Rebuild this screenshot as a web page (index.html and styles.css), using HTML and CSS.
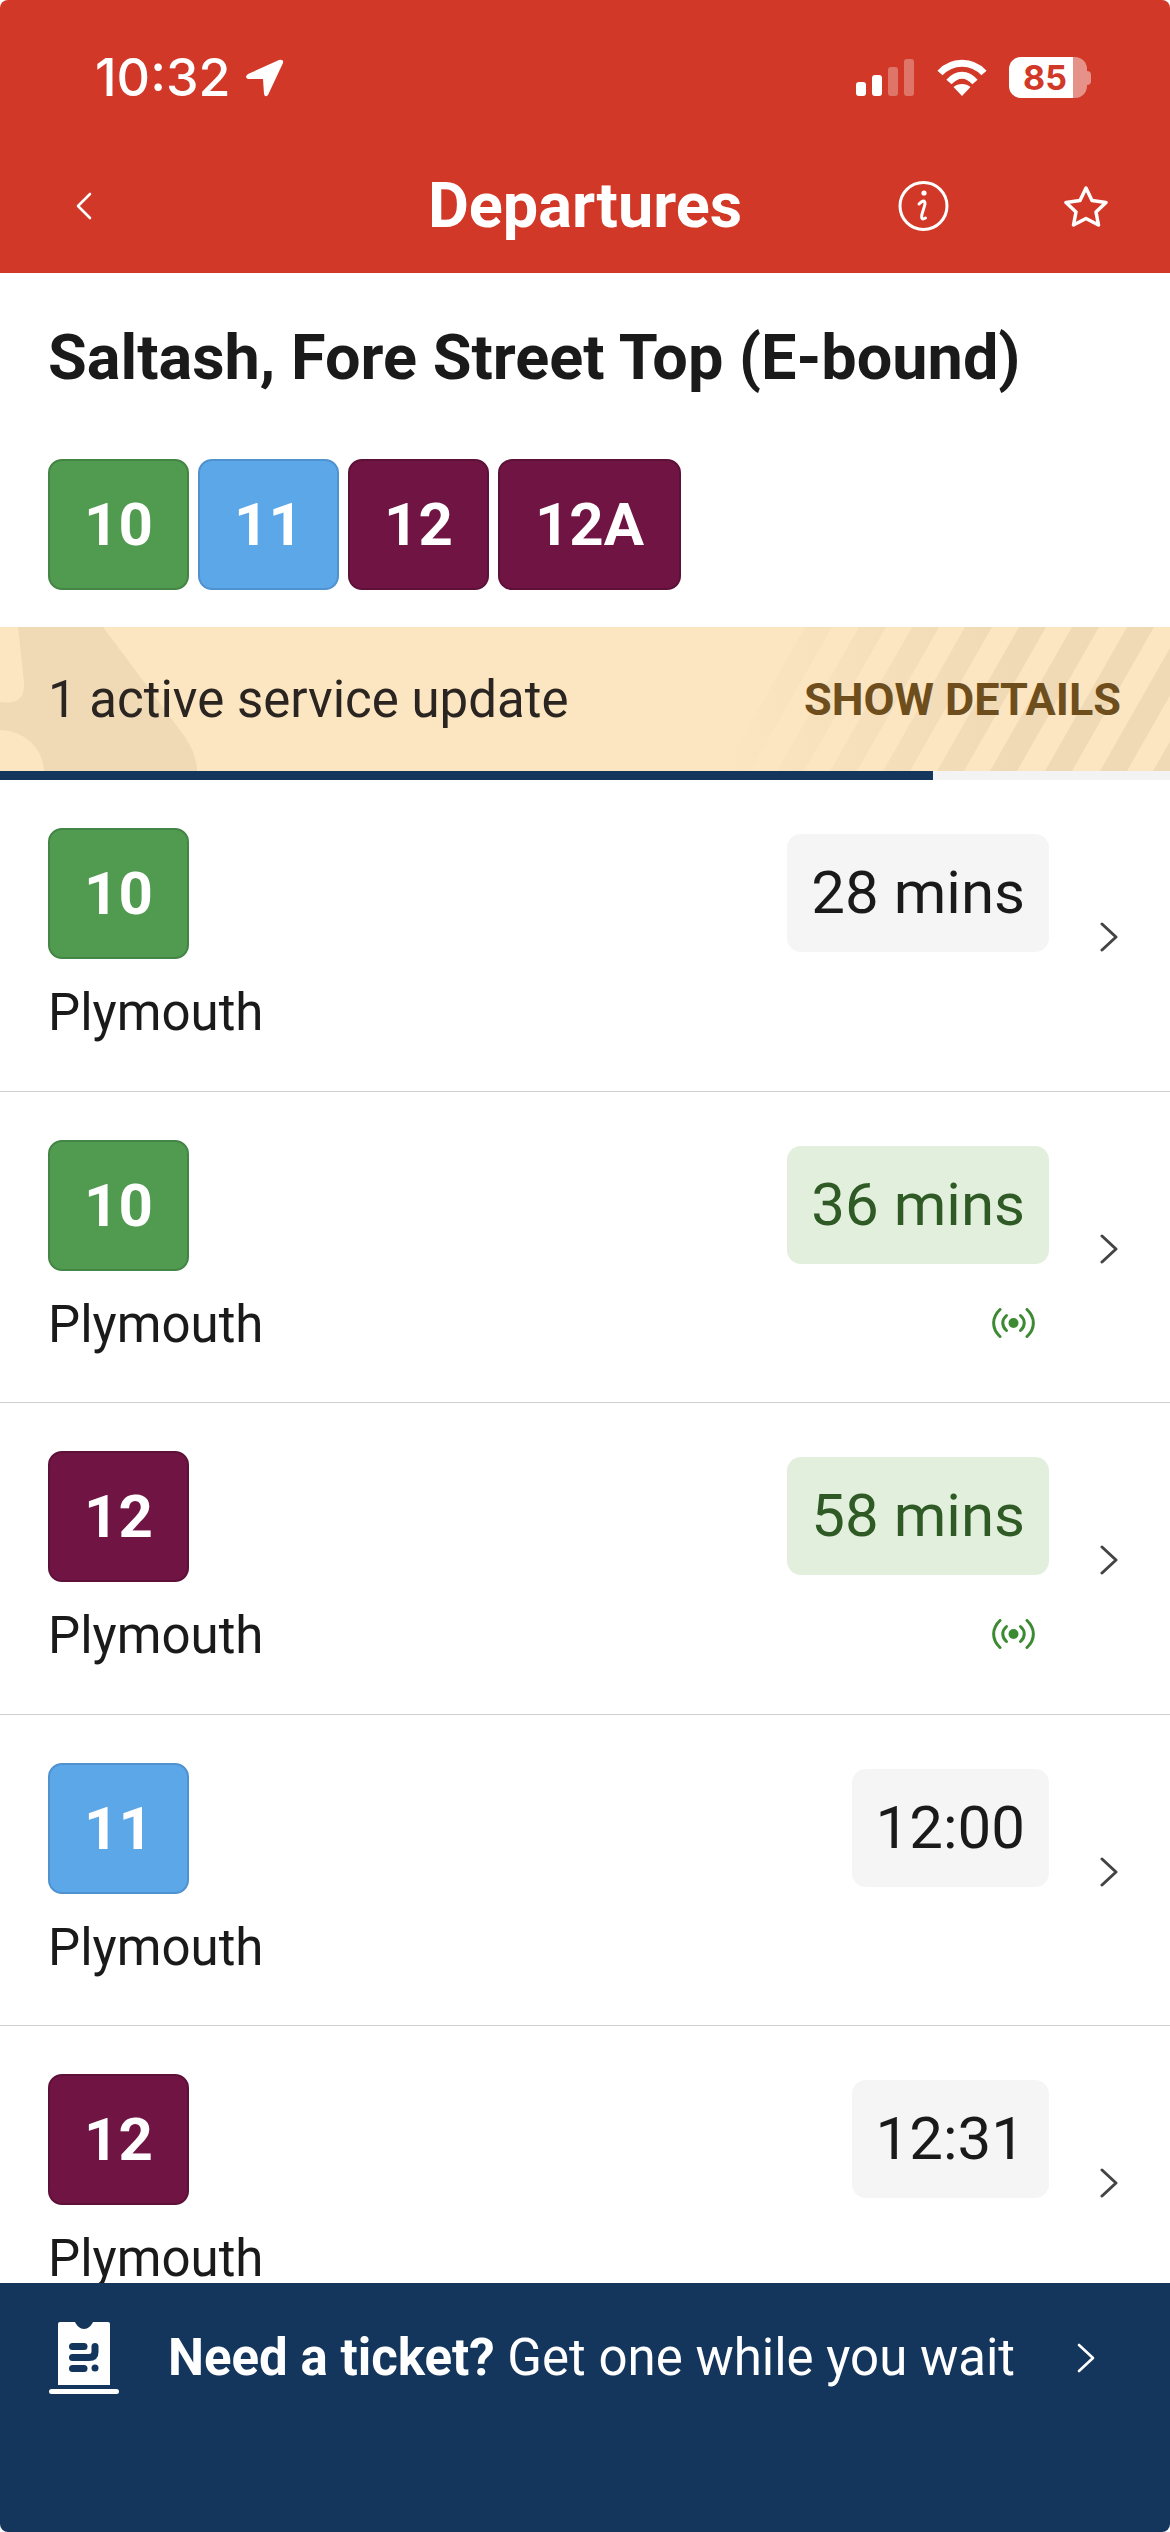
FILE: index.html
```html
<!DOCTYPE html>
<html>
<head>
    <title>Departures</title>
    <link rel="stylesheet" href="styles.css">
</head>
<body>
<div class="app">
    <header class="header">
        <div class="status">
            <div class="status-left">
                <span class="clock">10:32</span>
                <svg class="arrow" width="39" height="38" viewBox="0 0 39 38"><path d="M34 1L3 15Q-1 18 3 20L18 20L19 35Q20 39 23 36L38 4Q39 0 34 1Z" fill="#fff"/></svg>
            </div>
            <div class="status-right">
                <svg width="58" height="37" viewBox="0 0 58 37" fill="#fff">
                    <rect x="0" y="23" width="10" height="14" rx="3"/>
                    <rect x="16" y="16" width="10" height="21" rx="3"/>
                    <rect x="32" y="8" width="10" height="29" rx="3" opacity=".3"/>
                    <rect x="48" y="0" width="10" height="37" rx="3" opacity=".3"/>
                </svg>
                <svg class="wifi" width="50" height="37" viewBox="0 0 50 37" fill="none" stroke="#fff" stroke-width="7">
                    <path d="M3 14C15 1 35 1 47 14"/>
                    <path d="M12 23C20 14 30 14 38 23"/>
                    <path d="M25 37L16.5 28C21 24 29 24 33.5 28Z" fill="#fff" stroke="none"/>
                </svg>
                <div class="battery">
                    <div class="battery-body">85</div>
                    <div class="battery-nub"></div>
                </div>
            </div>
        </div>
        <nav class="nav">
            <svg class="back" width="16" height="28" viewBox="0 0 16 28" fill="none" stroke="#fff" stroke-width="2.6" stroke-linecap="round" stroke-linejoin="round"><path d="M14 2L2 14L14 26"/></svg>
            <h1 class="nav-title">Departures</h1>
            <div class="nav-actions">
                <svg width="51" height="50" viewBox="0 0 51 50" fill="none" stroke="#fff" stroke-width="3" stroke-linecap="round">
                    <circle cx="25.5" cy="25" r="23.5"/>
                    <circle cx="26" cy="12" r="2.6" fill="#fff" stroke="none"/>
                    <path d="M21 23Q27 17 27 23Q26 27 24 33Q22.5 40 27.5 37"/>
                </svg>
                <svg width="44" height="42" viewBox="0 0 44 42" fill="none" stroke="#fff" stroke-width="3.5" stroke-linejoin="round"><path d="M22 3L28 15.5L42 17.5L32 27L34.5 40L22 33.5L9.5 40L12 27L2 17.5L16 15.5Z"/></svg>
            </div>
        </nav>
    </header>

    <section class="stop">
        <h2 class="stop-name">Saltash, Fore Street Top (E-bound)</h2>
        <div class="routes">
            <span class="badge green">10</span>
            <span class="badge blue">11</span>
            <span class="badge maroon">12</span>
            <span class="badge maroon wide">12A</span>
        </div>
    </section>

    <div class="notice">
        <svg class="notice-bg" width="1170" height="144" viewBox="0 0 1170 144">
            <defs>
                <linearGradient id="fade" gradientUnits="userSpaceOnUse" x1="720" y1="0" x2="1010" y2="0">
                    <stop offset="0" stop-color="#f0dab6" stop-opacity="0"/>
                    <stop offset="1" stop-color="#f0dab6"/>
                </linearGradient>
            </defs>
            <path d="M0 0H103L185 110Q197 128 197 144H0Z" fill="#f0dab6"/>
            <path d="M0 0H18L24 56Q25 75 8 75.5L0 75Z" fill="#fce6c2"/>
            <ellipse cx="0" cy="146" rx="44" ry="43" fill="#fce6c2"/>
            <g fill="url(#fade)">
                <polygon points="723,144 750,144 832,0 805,0"/>
                <polygon points="777,144 804,144 886,0 859,0"/>
                <polygon points="830,144 857,144 939,0 912,0"/>
                <polygon points="883,144 910,144 992,0 965,0"/>
                <polygon points="937,144 964,144 1046,0 1019,0"/>
                <polygon points="990,144 1017,144 1099,0 1072,0"/>
                <polygon points="1045,144 1072,144 1154,0 1127,0"/>
                <polygon points="1100,144 1127,144 1209,0 1182,0"/>
                <polygon points="1153,144 1180,144 1262,0 1235,0"/>
            </g>
        </svg>
        <span class="notice-text">1 active service update</span>
        <span class="notice-link">SHOW DETAILS</span>
    </div>
    <div class="progress"><div class="progress-bar"></div></div>

    <main class="list">
        <div class="row">
            <div class="row-main">
                <span class="badge green">10</span>
                <div class="dest">Plymouth</div>
            </div>
            <div class="row-time">
                <span class="pill">28 mins</span>
            </div>
            <svg class="chevron" width="18" height="30" viewBox="0 0 18 30" fill="none" stroke="#444" stroke-width="3" stroke-linecap="round" stroke-linejoin="round"><path d="M2 2L16 15L2 28"/></svg>
        </div>
        <div class="row">
            <div class="row-main">
                <span class="badge green">10</span>
                <div class="dest">Plymouth</div>
            </div>
            <div class="row-time">
                <span class="pill live">36 mins</span>
                <svg class="live-icon" width="43" height="30" viewBox="0 0 43 30" fill="none" stroke="#3c8a32" stroke-width="3" stroke-linecap="round">
                    <path d="M8 1.5C-.5 9.5-.5 20.5 8 28.5"/>
                    <path d="M35 1.5C43.5 9.5 43.5 20.5 35 28.5"/>
                    <path d="M14.5 7.5C9.5 12 9.5 18 14.5 22.5"/>
                    <path d="M28.5 7.5C33.5 12 33.5 18 28.5 22.5"/>
                    <circle cx="21.5" cy="15" r="5" fill="#3c8a32" stroke="none"/>
                </svg>
            </div>
            <svg class="chevron" width="18" height="30" viewBox="0 0 18 30" fill="none" stroke="#444" stroke-width="3" stroke-linecap="round" stroke-linejoin="round"><path d="M2 2L16 15L2 28"/></svg>
        </div>
        <div class="row">
            <div class="row-main">
                <span class="badge maroon">12</span>
                <div class="dest">Plymouth</div>
            </div>
            <div class="row-time">
                <span class="pill live">58 mins</span>
                <svg class="live-icon" width="43" height="30" viewBox="0 0 43 30" fill="none" stroke="#3c8a32" stroke-width="3" stroke-linecap="round">
                    <path d="M8 1.5C-.5 9.5-.5 20.5 8 28.5"/>
                    <path d="M35 1.5C43.5 9.5 43.5 20.5 35 28.5"/>
                    <path d="M14.5 7.5C9.5 12 9.5 18 14.5 22.5"/>
                    <path d="M28.5 7.5C33.5 12 33.5 18 28.5 22.5"/>
                    <circle cx="21.5" cy="15" r="5" fill="#3c8a32" stroke="none"/>
                </svg>
            </div>
            <svg class="chevron" width="18" height="30" viewBox="0 0 18 30" fill="none" stroke="#444" stroke-width="3" stroke-linecap="round" stroke-linejoin="round"><path d="M2 2L16 15L2 28"/></svg>
        </div>
        <div class="row">
            <div class="row-main">
                <span class="badge blue">11</span>
                <div class="dest">Plymouth</div>
            </div>
            <div class="row-time">
                <span class="pill">12:00</span>
            </div>
            <svg class="chevron" width="18" height="30" viewBox="0 0 18 30" fill="none" stroke="#444" stroke-width="3" stroke-linecap="round" stroke-linejoin="round"><path d="M2 2L16 15L2 28"/></svg>
        </div>
        <div class="row">
            <div class="row-main">
                <span class="badge maroon">12</span>
                <div class="dest">Plymouth</div>
            </div>
            <div class="row-time">
                <span class="pill">12:31</span>
            </div>
            <svg class="chevron" width="18" height="30" viewBox="0 0 18 30" fill="none" stroke="#444" stroke-width="3" stroke-linecap="round" stroke-linejoin="round"><path d="M2 2L16 15L2 28"/></svg>
        </div>
    </main>

    <footer class="ticket">
        <svg width="70" height="73" viewBox="0 0 70 73">
            <path d="M9 64V3a2 2 0 0 1 2-2H26C28 5 31 8 35 8S42 5 44 1H59a2 2 0 0 1 2 2V64Z" fill="#fff"/>
            <g fill="none" stroke="#14355c" stroke-width="7" stroke-linecap="round">
                <path d="M23.5 25.5H35"/>
                <path d="M23.5 36.5H40Q46 36.5 46 31V25.5"/>
                <path d="M23.5 47.5H35"/>
            </g>
            <circle cx="46" cy="47" r="3.5" fill="#14355c"/>
            <rect x="0" y="68" width="70" height="5" rx="2.5" fill="#fff"/>
        </svg>
        <p class="ticket-text"><b>Need a ticket?</b> Get one while you wait</p>
        <svg class="ticket-chevron" width="18" height="30" viewBox="0 0 18 30" fill="none" stroke="#fff" stroke-width="2.6" stroke-linecap="round" stroke-linejoin="round"><path d="M2 2L16 15L2 28"/></svg>
    </footer>
</div>
</body>
</html>
```

FILE: styles.css
```css
* {
    box-sizing: border-box;
}

body {
    margin: 0;
    background: #fff;
    font-family: Roboto, "Liberation Sans", sans-serif;
}

.app {
    width: 1170px;
    height: 2532px;
    display: flex;
    flex-direction: column;
    overflow: hidden;
    border-radius: 8px;
}

/* header */
.header {
    height: 273px;
    flex: none;
    padding-top: 57px;
    background: #d13827;
    color: #fff;
}

.status {
    display: flex;
    justify-content: space-between;
    align-items: center;
    height: 41px;
    padding: 0 79px 0 95px;
}

.status-left {
    display: flex;
    align-items: center;
    gap: 14px;
}

.clock {
    font-family: Inter, sans-serif;
    font-weight: 500;
    font-size: 52px;
    line-height: 41px;
}

.status-right {
    display: flex;
    align-items: center;
}

.wifi {
    margin-left: 23px;
}

.battery {
    display: flex;
    align-items: center;
    margin-left: 22px;
}

.battery-body {
    width: 78px;
    height: 41px;
    border-radius: 12px;
    background: linear-gradient(to right, #fff 64px, rgba(255, 255, 255, 0.45) 64px);
    color: #d13827;
    font-family: Inter, sans-serif;
    font-weight: 700;
    font-size: 34px;
    line-height: 41px;
    text-align: center;
    padding-right: 6px;
}

.battery-nub {
    width: 4px;
    height: 14px;
    border-radius: 0 7px 7px 0;
    background: rgba(255, 255, 255, 0.45);
}

.nav {
    display: grid;
    grid-template-columns: 1fr auto 1fr;
    align-items: center;
    height: 50px;
    margin-top: 83px;
    padding: 0 62px;
}

.back {
    margin-left: 14px;
}

.nav-title {
    margin: 0;
    font-size: 63px;
    font-weight: 700;
    line-height: 50px;
}

.nav-actions {
    display: flex;
    justify-content: flex-end;
    align-items: center;
    gap: 115px;
}

/* stop heading */
.stop {
    flex: none;
    padding: 50px 48px 37px;
}

.stop-name {
    margin: 0 0 66px;
    font-size: 63px;
    font-weight: 700;
    line-height: 70px;
    color: #1a1a1a;
}

.routes {
    display: flex;
    gap: 9px;
}

.badge {
    display: inline-flex;
    align-items: center;
    justify-content: center;
    width: 141px;
    height: 131px;
    border: 2px solid;
    border-radius: 14px;
    color: #fff;
    font-size: 60px;
    font-weight: 700;
}

.badge.wide {
    width: 183px;
}

.green {
    background: #519b50;
    border-color: #438544;
}

.blue {
    background: #5ca7e8;
    border-color: #4f92cf;
}

.maroon {
    background: #701443;
    border-color: #5e1138;
}

/* service update */
.notice {
    flex: none;
    height: 144px;
    display: flex;
    justify-content: space-between;
    align-items: center;
    padding: 0 49px 0 48px;
    background: #fce6c2;
    position: relative;
    overflow: hidden;
}

.notice-bg {
    position: absolute;
    left: 0;
    top: 0;
}

.notice-text {
    position: relative;
    font-size: 51px;
    color: #2a2520;
}

.notice-link {
    position: relative;
    font-size: 45px;
    font-weight: 700;
    color: #6e4e1d;
}

.progress {
    flex: none;
    height: 9px;
    background: #f3f3f3;
}

.progress-bar {
    width: 933px;
    height: 100%;
    background: #14355c;
}

/* departures */
.list {
    flex: 1;
    min-height: 0;
    overflow: hidden;
}

.row {
    display: flex;
    height: 311.5px;
    padding: 48px 52px 0 48px;
    border-bottom: 1px solid #cfcfcf;
}

.row-main {
    flex: 1;
}

.row-main .badge {
    display: flex;
}

.dest {
    margin-top: 24px;
    font-size: 51px;
    line-height: 60px;
    color: #1a1a1a;
}

.row-time {
    display: flex;
    flex-direction: column;
    align-items: flex-end;
    padding-top: 6px;
}

.pill {
    height: 118px;
    padding: 0 24px;
    border-radius: 14px;
    background: #f5f5f5;
    color: #1a1a1a;
    font-size: 60px;
    line-height: 118px;
}

.pill.live {
    background: #e2efdc;
    color: #2f5a26;
}

.live-icon {
    margin: 44px 14px 0 0;
}

.chevron {
    margin: 94px 0 0 51px;
}

/* ticket bar */
.ticket {
    flex: none;
    height: 249px;
    padding: 38px 75px 0 49px;
    display: flex;
    align-items: flex-start;
    background: #14355c;
    color: #fff;
}

.ticket-text {
    margin: 0 0 0 49px;
    font-size: 51px;
    line-height: 73px;
}

.ticket-chevron {
    margin: 22px 0 0 auto;
}
```
